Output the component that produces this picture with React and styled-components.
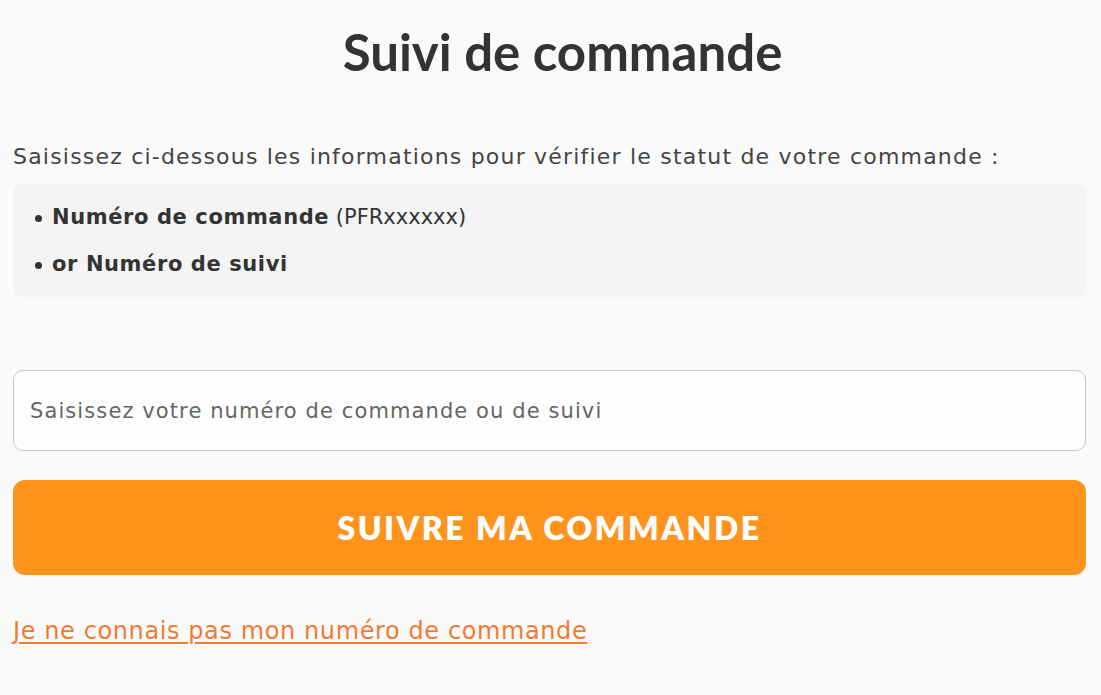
import styled, { createGlobalStyle } from "styled-components";

const GlobalStyle = createGlobalStyle`
  html, body {
    margin: 0;
    padding: 0;
    background: #fbfafa;
  }
  body {
    font-family: "DejaVu Sans", "Open Sans", sans-serif;
    color: #333;
  }
`;

const App = () => {
  return (
    <Page>
      <GlobalStyle />
      <Title>Suivi de commande</Title>
      <Intro>
        Saisissez ci-dessous les informations pour vérifier le statut de votre
        commande :
      </Intro>
      <InfoBox>
        <Item>
          <strong>Numéro de commande</strong> (PFRxxxxxx)
        </Item>
        <Item>
          <strong>or Numéro de suivi</strong>
        </Item>
      </InfoBox>
      <SearchInput placeholder="Saisissez votre numéro de commande ou de suivi" />
      <TrackButton>SUIVRE MA COMMANDE</TrackButton>
      <HelpLink href="#">Je ne connais pas mon numéro de commande</HelpLink>
    </Page>
  );
};

const Page = styled.div`
  width: 1073px;
  padding: 24px 15px 40px 13px;
  display: flex;
  flex-direction: column;
  border-right: 1px solid #ececec;
`;

const Title = styled.h1`
  margin: 0 0 0 26px;
  text-align: center;
  font-family: "Lato", sans-serif;
  font-size: 51px;
  font-weight: 700;
  line-height: 56px;
  color: #333;
`;

const Intro = styled.p`
  margin: 62px 0 0;
  font-size: 22px;
  line-height: 30px;
  letter-spacing: 1.2px;
  color: #444;
`;

const InfoBox = styled.ul`
  list-style: none;
  margin: 12px 0 0;
  padding: 18px 22px;
  background: #f4f4f4;
  border-radius: 8px;
  display: flex;
  flex-direction: column;
  gap: 17px;
`;

const Item = styled.li`
  position: relative;
  padding-left: 17px;
  font-size: 21px;
  line-height: 30px;
  color: #333;

  &::before {
    content: "";
    position: absolute;
    left: 0;
    top: 13px;
    width: 7px;
    height: 7px;
    border-radius: 50%;
    background: #333;
  }

  strong {
    font-weight: 700;
    letter-spacing: 0.6px;
  }
`;

const SearchInput = styled.input`
  margin-top: 73px;
  height: 81px;
  box-sizing: border-box;
  padding: 0 16px;
  border: 1.5px solid #c6c6c6;
  border-radius: 10px;
  background: #fdfdfd;
  font-family: "DejaVu Sans", "Open Sans", sans-serif;
  font-size: 21px;
  letter-spacing: 1.1px;
  color: #333;
  outline: none;

  &::placeholder {
    color: #666;
  }
`;

const TrackButton = styled.button`
  margin-top: 29px;
  height: 95px;
  border: none;
  border-radius: 12px;
  background: #ff931c;
  color: #fff;
  font-family: "Lato", "Open Sans", sans-serif;
  font-size: 32px;
  font-weight: 800;
  letter-spacing: 2.5px;
  cursor: pointer;
`;

const HelpLink = styled.a`
  align-self: flex-start;
  margin-top: 41px;
  font-size: 24px;
  line-height: 30px;
  letter-spacing: 0.6px;
  color: #f47a33;
  text-decoration: underline;
  text-underline-offset: 3px;
`;

export default App;
